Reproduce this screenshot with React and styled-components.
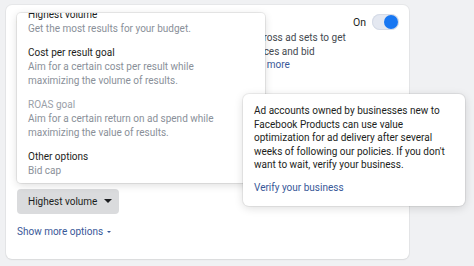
import React from "react"
import styled, { createGlobalStyle } from "styled-components"

const Global = createGlobalStyle`
  html, body {
    margin: 0;
    padding: 0;
    background: #f0f1f3;
    font-family: Roboto, "Liberation Sans", Arial, sans-serif;
    -webkit-font-smoothing: antialiased;
  }
`

const Page = styled.div`
  width: 474px;
  height: 266px;
  overflow: hidden;
  padding: 5px 0 0 6px;
  box-sizing: border-box;
`

const Card = styled.div`
  position: relative;
  width: 403px;
  height: 254px;
  box-sizing: border-box;
  background: #fff;
  border-radius: 6px;
  box-shadow: 0 0 0 1px rgba(0, 0, 0, 0.04), 0 1px 2px rgba(0, 0, 0, 0.06);
  padding: 9px 10px 0 11px;
  font-size: 10px;
  color: #1c1e21;
`

const SettingRow = styled.div`
  display: flex;
  align-items: flex-start;
`

const Label = styled.div`
  flex: 0 0 173px;
  padding-top: 2px;
  font-weight: 500;
  font-size: 11px;
`

const Body = styled.div`
  flex: 1;
`

const ToggleGroup = styled.div`
  display: flex;
  justify-content: flex-end;
  align-items: center;
  gap: 6px;
  height: 16px;
  font-size: 10.5px;
`

const Switch = styled.div`
  position: relative;
  width: 27px;
  height: 16px;
  border-radius: 8px;
  background: #e4e8f1;
  box-shadow: inset 0 0 0 1px #d5dbe7;
`

const Knob = styled.span`
  position: absolute;
  right: 1px;
  top: 1px;
  width: 14px;
  height: 14px;
  border-radius: 50%;
  background: #1877f2;
`

const Description = styled.div`
  margin-top: 1px;
  line-height: 13.5px;
  color: #444950;
  white-space: nowrap;
`

const Line = styled.div``

const Link = styled.span`
  color: #385898;
`

const BidSection = styled.div`
  position: relative;
  margin-top: 117px;
`

const Menu = styled.div`
  position: absolute;
  left: 0;
  bottom: calc(100% + 6px);
  width: 248px;
  height: 170px;
  overflow: hidden;
  background: #fff;
  border-radius: 4px;
  box-shadow: 0 0 0 1px rgba(0, 0, 0, 0.07), 0 2px 8px rgba(0, 0, 0, 0.14);
  z-index: 2;
`

const Options = styled.ul`
  list-style: none;
  margin: -5px 0 0 0;
  padding: 0 11px;
  display: flex;
  flex-direction: column;
  gap: 10px;
  line-height: 14px;
`

const Option = styled.li`
  color: ${p => (p.disabled ? "#9aa0a8" : "#1c1e21")};
`

const OptionText = styled.div`
  color: #8a9099;
`

const DropButton = styled.div`
  display: inline-flex;
  align-items: center;
  gap: 7px;
  height: 25px;
  padding: 0 7px 0 11px;
  border-radius: 4px;
  background: #dadbdd;
  color: #1c1e21;
`

const Caret = styled.span`
  width: 0;
  height: 0;
  border-left: ${p => p.size}px solid transparent;
  border-right: ${p => p.size}px solid transparent;
  border-top: ${p => p.size}px solid ${p => p.color};
`

const ShowMore = styled.div`
  margin-top: 11px;
  display: flex;
  align-items: center;
  gap: 4px;
  color: #385898;
  line-height: 14px;
`

const Tooltip = styled.div`
  position: absolute;
  left: 237px;
  top: 89px;
  width: 222px;
  height: 112px;
  box-sizing: border-box;
  padding: 10px 10px 0 11px;
  background: #fff;
  border-radius: 6px;
  box-shadow: 0 0 0 1px rgba(0, 0, 0, 0.06), 0 2px 10px rgba(0, 0, 0, 0.14);
  line-height: 13.5px;
  color: #1c1e21;
  z-index: 3;
`

const TipText = styled.p`
  margin: 0 0 9px 0;
`

const options = [
  { title: "Highest volume", lines: ["Get the most results for your budget."] },
  {
    title: "Cost per result goal",
    lines: ["Aim for a certain cost per result while", "maximizing the volume of results."],
  },
  {
    title: "ROAS goal",
    disabled: true,
    lines: ["Aim for a certain return on ad spend while", "maximizing the value of results."],
  },
  { title: "Other options", lines: ["Bid cap"] },
]

export default function App() {
  return (
    <Page>
      <Global />
      <Card>
        <SettingRow>
          <Label>Campaign budget optimization</Label>
          <Body>
            <ToggleGroup>
              On
              <Switch>
                <Knob />
              </Switch>
            </ToggleGroup>
            <Description>
              <Line>all the budget across ad sets to get</Line>
              <Line>any delivery choices and bid</Line>
              <Line>
                strategies. <Link>Learn more</Link>
              </Line>
            </Description>
          </Body>
        </SettingRow>
        <BidSection>
          <Menu>
            <Options>
              {options.map(o => (
                <Option key={o.title} disabled={o.disabled}>
                  {o.title}
                  {o.lines.map(l => (
                    <OptionText key={l}>{l}</OptionText>
                  ))}
                </Option>
              ))}
            </Options>
          </Menu>
          <DropButton>
            Highest volume
            <Caret size={4} color="#1c1e21" />
          </DropButton>
        </BidSection>
        <ShowMore>
          Show more options
          <Caret size={2.5} color="#385898" />
        </ShowMore>
        <Tooltip>
          <TipText>
            Ad accounts owned by businesses new to Facebook Products can use value
            optimization for ad delivery after several weeks of following our policies. If you
            don't want to wait, verify your business.
          </TipText>
          <Link>Verify your business</Link>
        </Tooltip>
      </Card>
    </Page>
  )
}
